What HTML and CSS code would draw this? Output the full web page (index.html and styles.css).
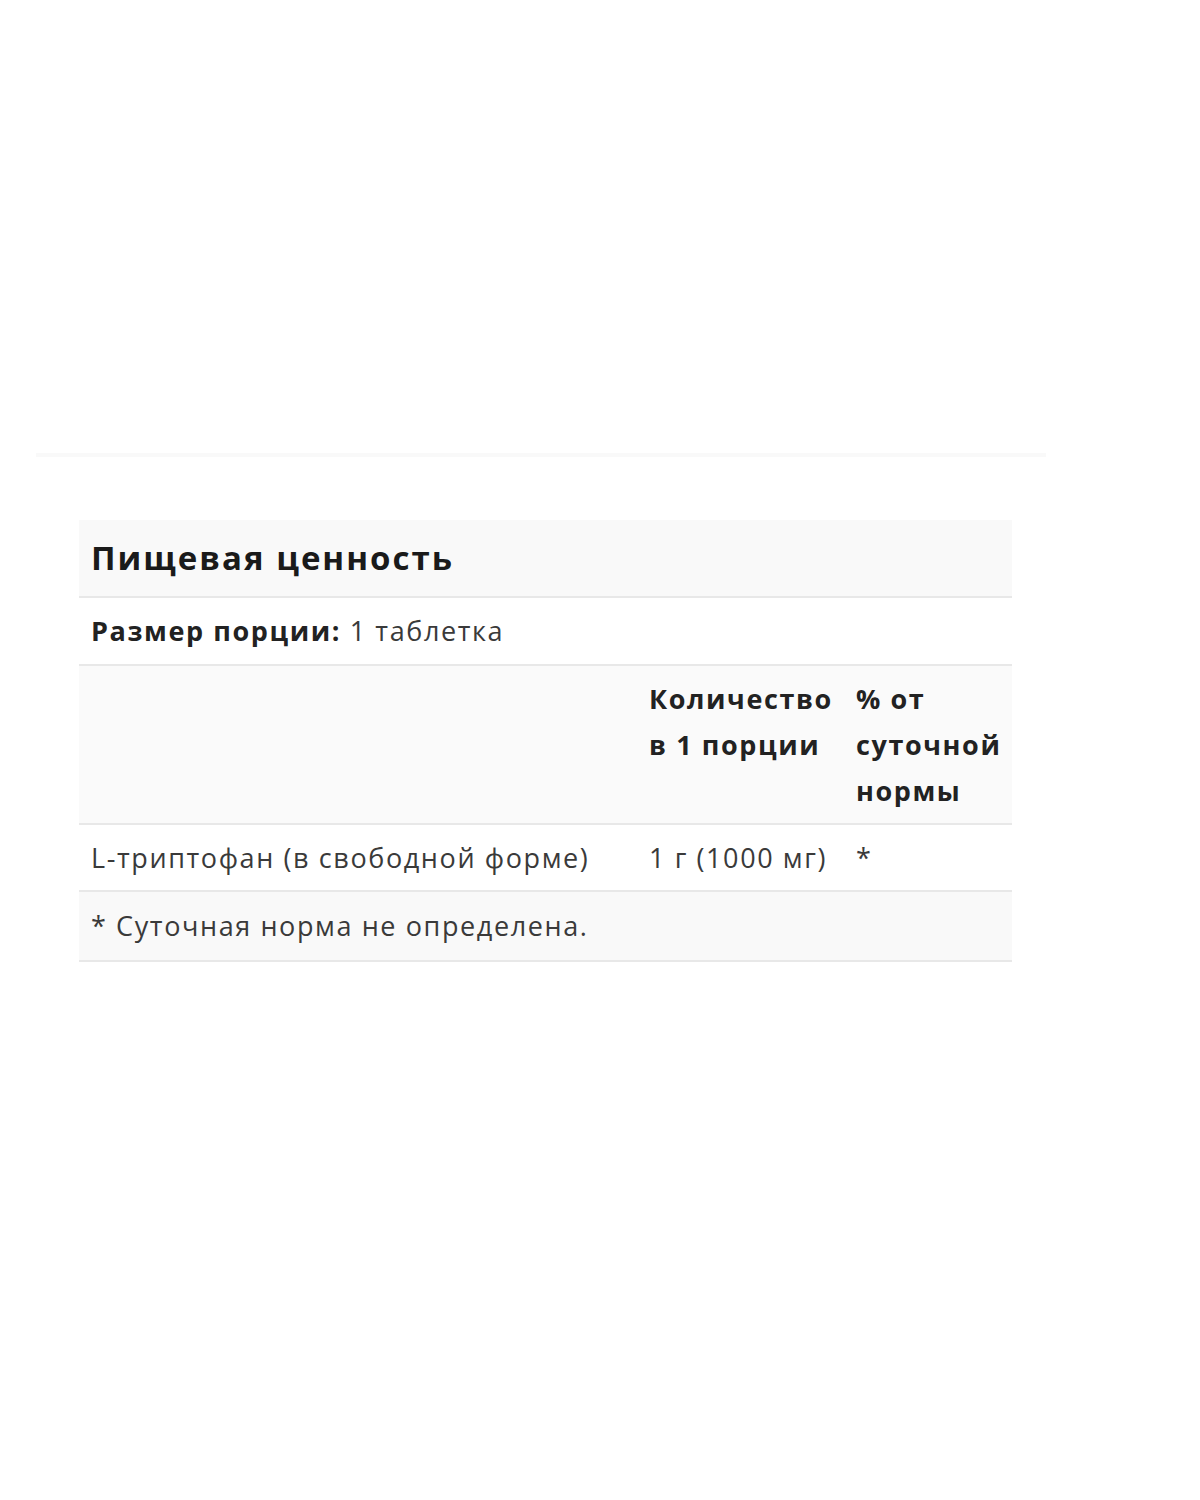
FILE: index.html
```html
<!DOCTYPE html>
<html lang="ru">
<head>
<meta charset="utf-8">
<link rel="stylesheet" href="styles.css">
</head>
<body>
<div class="page">
  <div class="rule"></div>
  <table class="facts">
    <colgroup>
      <col class="c1"><col class="c2"><col class="c3">
    </colgroup>
    <tr class="title-row"><td colspan="3">Пищевая ценность</td></tr>
    <tr class="serving-row"><td colspan="3"><b>Размер порции:</b> 1 таблетка</td></tr>
    <tr class="head-row"><td></td><td>Количество в 1 порции</td><td>% от суточной нормы</td></tr>
    <tr class="data-row"><td>L-триптофан (в свободной форме)</td><td>1 г (1000 мг)</td><td>*</td></tr>
    <tr class="note-row"><td colspan="3">* Суточная норма не определена.</td></tr>
  </table>
</div>
</body>
</html>
```

FILE: styles.css
```css
html, body {
  margin: 0;
  background: #ffffff;
}
.page {
  width: 1200px;
  height: 1500px;
  padding-top: 453px;
  box-sizing: border-box;
  font-family: "Open Sans", "Noto Sans", sans-serif;
}
.rule {
  margin-left: 36px;
  width: 1010px;
  height: 4px;
  background: #f9f9f9;
}
.facts {
  margin: 63px 0 0 79px;
  width: 933px;
  border-collapse: collapse;
  table-layout: fixed;
  font-size: 27px;
  letter-spacing: 1.6px;
  color: #3a3a3a;
}
.c1 { width: 558px; }
.c2 { width: 207px; }
.c3 { width: 168px; }
.facts td {
  padding: 10px 12px;
  line-height: 46px;
  vertical-align: top;
  border-bottom: 2px solid #e8e8e8;
}
.title-row td {
  background: #f9f9f9;
  font-size: 33px;
  letter-spacing: 2px;
  font-weight: 700;
  color: #1a1a1a;
  line-height: 56px;
}
.serving-row td b {
  color: #222;
}
.head-row td {
  background: #fafafa;
  font-weight: 700;
  color: #222;
  padding-bottom: 9px;
}
.data-row td {
  padding-bottom: 9px;
}
.note-row td {
  background: #f9f9f9;
  padding-top: 11px;
  padding-bottom: 11px;
}
```
